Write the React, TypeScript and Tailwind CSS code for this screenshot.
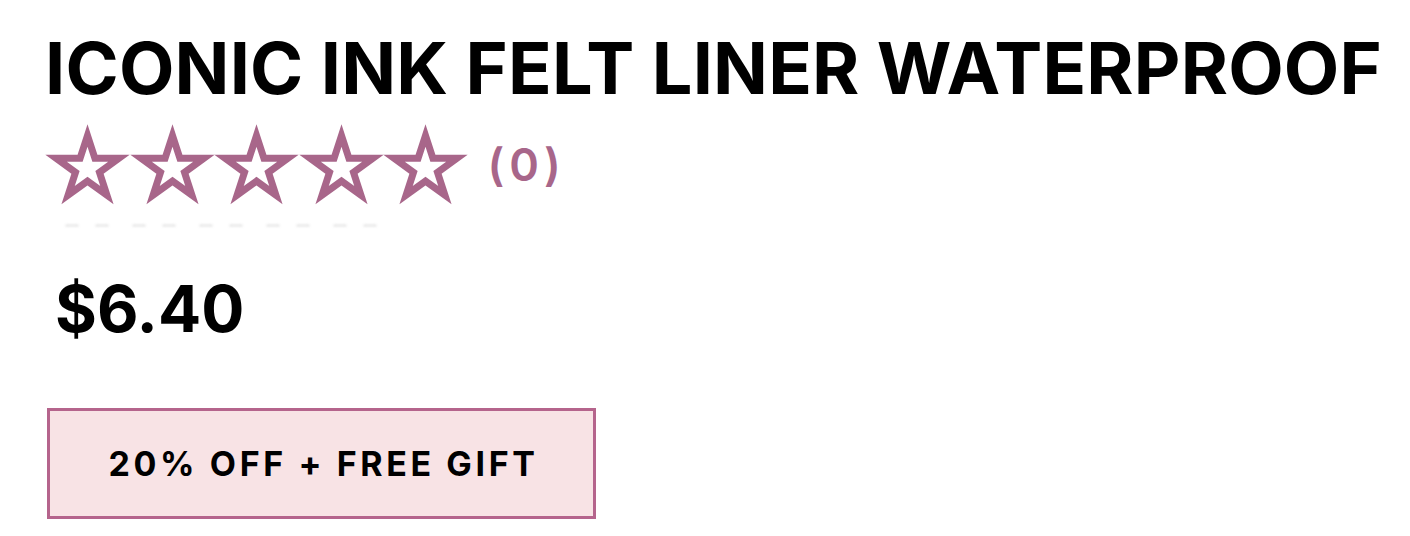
import React from 'react';

function Star() {
  return (
    <svg viewBox="0 0 85 82" className="w-[85px] h-[82px] shrink-0 overflow-visible -mr-[0.5px]">
      <path
        d="M42.5 11.5 L49.91 34.31 L73.89 34.3 L54.48 48.39 L61.9 71.2 L42.5 57.1 L23.1 71.2 L30.52 48.39 L11.11 34.3 L35.09 34.31 Z"
        fill="none"
        stroke="#a8668a"
        strokeWidth="7"
        strokeLinejoin="miter"
        strokeMiterlimit="6"
      />
    </svg>
  );
}

export default function App() {
  return (
    <div className="w-[1410px] h-[536px] bg-white overflow-hidden font-['Inter',sans-serif] text-black">
      <div className="pl-[45px] pt-[26px]">
        <h1 className="text-[72px] font-bold leading-[84px] tracking-[0.2px] whitespace-nowrap">
          ICONIC INK FELT LINER WATERPROOF
        </h1>

        <div className="flex items-center mt-[14px]">
          <div className="flex">
            <Star />
            <Star />
            <Star />
            <Star />
            <Star />
          </div>
          <span className="ml-[20px] text-[45px] leading-[56px] font-semibold tracking-[5px] text-[#a8668a]">(0)</span>
        </div>

        <div className="flex ml-[20px] mt-[18px]">
          {Array.from({ length: 5 }).map((_, i) => (
            <div key={i} className="flex gap-[16px] mr-[23px]">
              <div className="w-[14px] h-[3px] rounded-full bg-[#ececec] blur-[1px]" />
              <div className="w-[14px] h-[3px] rounded-full bg-[#ececec] blur-[1px]" />
            </div>
          ))}
        </div>

        <div className="mt-[44px] ml-[10px] text-[64px] font-bold leading-[76px]">$6.40</div>

        <button className="mt-[61px] ml-[2px] w-[549px] h-[111px] border-[3px] border-[#b5648c] bg-[#f8e3e5] flex items-center justify-center">
          <span className="text-[34px] font-bold tracking-[3.6px] pl-[4px]">20% OFF + FREE GIFT</span>
        </button>
      </div>
    </div>
  );
}
